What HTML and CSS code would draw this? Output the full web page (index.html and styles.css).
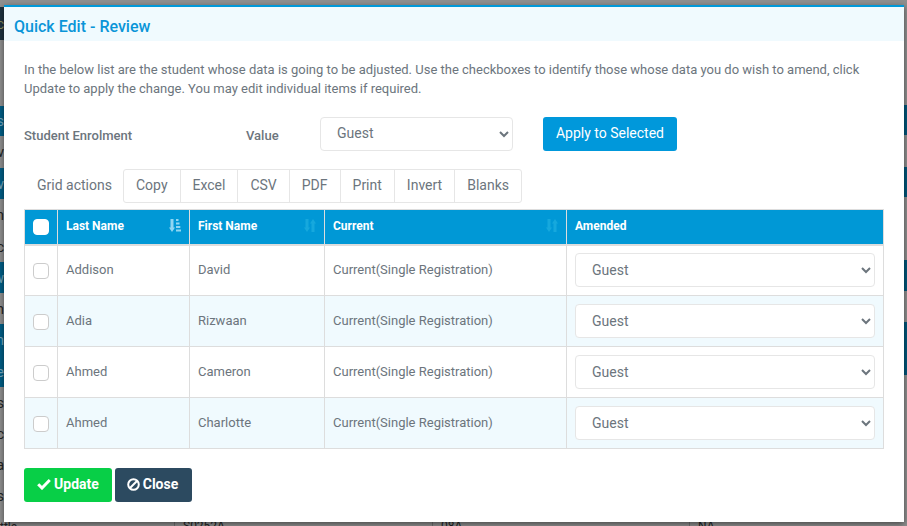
FILE: index.html
```html
<!DOCTYPE html>
<html lang="en">
<head>
  <meta charset="UTF-8">
  <meta name="viewport" content="width=device-width, initial-scale=1.0">
  <title>Quick Edit - Review</title>
  <link rel="stylesheet" href="styles.css">
</head>
<body>
  <!-- dimmed page behind the dialog -->
  <div class="backdrop">
    <div class="strip-left">
      <div></div>
      <div class="dark">ic</div>
      <div></div>
      <div class="band">s</div>
      <div>v</div>
      <div class="band">v</div>
      <div>n</div>
      <div>c</div>
      <div class="band">w</div>
      <div>h</div>
      <div class="band">n</div>
      <div class="band">e</div>
      <div>s</div>
      <div>c</div>
      <div>a</div>
      <div>s</div>
      <div class="tail">ttle</div>
    </div>
    <div class="behind">
      <div class="behind-row">
        <div class="behind-cell first"></div>
        <div class="behind-cell second">S0252A</div>
        <div class="behind-cell third">08A</div>
        <div class="behind-cell">NA</div>
      </div>
    </div>
    <div class="strip-right">
      <div></div>
      <div class="band"></div>
      <div></div>
      <div class="band"></div>
      <div></div>
      <div class="band"></div>
      <div></div>
      <div class="band"></div>
      <div></div>
    </div>
  </div>

  <div class="modal">
    <div class="modal-header">Quick Edit - Review</div>
    <div class="modal-body">
      <p class="intro">In the below list are the student whose data is going to be adjusted. Use the checkboxes to identify those whose data you do wish to amend, click Update to apply the change. You may edit individual items if required.</p>

      <div class="bulk-row">
        <label class="bulk-label">Student Enrolment</label>
        <label class="bulk-value">Value</label>
        <select class="form-select bulk-select"><option>Guest</option></select>
        <button class="btn btn-apply">Apply to Selected</button>
      </div>

      <div class="grid-actions">
        <span class="grid-title">Grid actions</span>
        <div class="grid-buttons">
          <button>Copy</button>
          <button>Excel</button>
          <button>CSV</button>
          <button>PDF</button>
          <button>Print</button>
          <button>Invert</button>
          <button>Blanks</button>
        </div>
      </div>

      <table class="review-table">
        <colgroup>
          <col class="col-check">
          <col class="col-last">
          <col class="col-first">
          <col class="col-current">
          <col>
        </colgroup>
        <thead>
          <tr>
            <th><input type="checkbox" class="check check-head"></th>
            <th>
              <div class="th-inner">Last Name
                <svg class="sort sort-active" width="12" height="13" viewBox="0 0 12 13"><path d="M1.500 0h3v8.500H6L3 13 0 8.500h1.500z"/><path d="M7 0h2.500v2H7zM7 3.500h3.500v2H7zM7 7h4.300v2H7zM7 10.500h5v2H7z"/></svg>
              </div>
            </th>
            <th>
              <div class="th-inner">First Name
                <svg class="sort" width="12" height="13" viewBox="0 0 12 13"><path d="M1.500 0h3v8.500H6L3 13 0 8.500h1.500zM7.500 13h3V4.500H12L9 0 6 4.500h1.500z"/></svg>
              </div>
            </th>
            <th>
              <div class="th-inner">Current
                <svg class="sort" width="12" height="13" viewBox="0 0 12 13"><path d="M1.500 0h3v8.500H6L3 13 0 8.500h1.500zM7.500 13h3V4.500H12L9 0 6 4.500h1.500z"/></svg>
              </div>
            </th>
            <th>Amended</th>
          </tr>
        </thead>
        <tbody>
          <tr>
            <td><input type="checkbox" class="check"></td>
            <td>Addison</td>
            <td>David</td>
            <td>Current(Single Registration)</td>
            <td class="cell-select"><select class="form-select"><option>Guest</option></select></td>
          </tr>
          <tr>
            <td><input type="checkbox" class="check"></td>
            <td>Adia</td>
            <td>Rizwaan</td>
            <td>Current(Single Registration)</td>
            <td class="cell-select"><select class="form-select"><option>Guest</option></select></td>
          </tr>
          <tr>
            <td><input type="checkbox" class="check"></td>
            <td>Ahmed</td>
            <td>Cameron</td>
            <td>Current(Single Registration)</td>
            <td class="cell-select"><select class="form-select"><option>Guest</option></select></td>
          </tr>
          <tr>
            <td><input type="checkbox" class="check"></td>
            <td>Ahmed</td>
            <td>Charlotte</td>
            <td>Current(Single Registration)</td>
            <td class="cell-select"><select class="form-select"><option>Guest</option></select></td>
          </tr>
        </tbody>
      </table>

      <div class="modal-actions">
        <button class="btn btn-update">
          <svg width="14" height="12" viewBox="0 0 14 12"><path d="M1.200 6.200 5 10l7.800-8" fill="none" stroke="#fff" stroke-width="3"/></svg>Update
        </button>
        <button class="btn btn-close">
          <svg width="13" height="13" viewBox="0 0 13 13"><circle cx="6.500" cy="6.500" r="5.300" fill="none" stroke="#fff" stroke-width="2"/><path d="M2.800 10.200l7.400-7.400" stroke="#fff" stroke-width="2"/></svg>Close
        </button>
      </div>
    </div>
  </div>
</body>
</html>
```

FILE: styles.css
```css
* {
  box-sizing: border-box;
}
html, body {
  margin: 0;
  padding: 0;
  width: 100%;
  height: 100%;
  overflow: hidden;
}
body {
  font-family: Roboto, "Liberation Sans", sans-serif;
  font-size: 13px;
  color: #6c757d;
  background-color: #8f8f8f;
}

/* Dimmed page */
.backdrop {
  display: flex;
  height: 526px;
  color: #222;
  font-size: 14px;
  overflow: hidden;
}
.strip-left {
  width: 4px;
  flex-shrink: 0;
  display: grid;
  grid-template-rows: 7px 33px 66px 30px 32px 31px 32px 31px 31px 31px 32px 31px 31px 31px 31px 31px 15px;
}
.strip-left div {
  display: flex;
  align-items: center;
  justify-content: flex-end;
  width: 4px;
  overflow: hidden;
}
.strip-left .band {
  background-color: #005d85;
  color: #7aa9bd;
}
.strip-left .dark {
  background-color: #1e3240;
  color: #8a8f60;
}
.strip-left .tail {
  width: 20px;
  justify-content: flex-start;
  align-items: flex-start;
  font-size: 12px;
  line-height: 11px;
  padding-top: 11px;
}
.strip-right {
  width: 3px;
  flex-shrink: 0;
  display: grid;
  grid-template-rows: 105px 30px 32px 30px 63px 31px 31px 53px 1fr;
}
.strip-right .band {
  background-color: #00567a;
}
.behind {
  flex: 1;
  display: flex;
  flex-direction: column;
  justify-content: flex-end;
}
.behind-row {
  display: flex;
  height: 5px;
  overflow: hidden;
  line-height: 11px;
  font-size: 12px;
}
.behind-cell {
  border-left: 1px solid #6f6f6f;
  padding-left: 8px;
  flex: 1;
}
.behind-cell.first {
  border-left: 0;
  flex: 0 0 170px;
}
.behind-cell.second {
  flex: 0 0 258px;
}
.behind-cell.third {
  flex: 0 0 257px;
}

/* Dialog */
.modal {
  position: absolute;
  top: 5px;
  left: 4px;
  width: 900px;
  height: 517px;
  background-color: #fff;
  border-top: 2px solid #0098d8;
  box-shadow: 0 2px 6px rgba(0, 0, 0, 0.5);
}
.modal-header {
  height: 34px;
  padding-left: 10px;
  background-color: #f0fafe;
  color: #0a95d8;
  font-size: 16px;
  font-weight: 500;
  line-height: 40px;
}
.modal-body {
  padding: 19px 20px 0;
}
.intro {
  margin: 0;
  line-height: 19px;
}

.bulk-row {
  display: flex;
  align-items: center;
  margin-top: 19px;
}
.bulk-label,
.bulk-value {
  font-weight: 500;
  padding-top: 2px;
}
.bulk-label {
  width: 222px;
}
.bulk-value {
  width: 74px;
}
.form-select {
  width: 100%;
  height: 34px;
  padding: 0 8px 0 12px;
  background-color: #fff;
  border: 1px solid #e6e6e6;
  border-radius: 4px;
  color: #6c757d;
  font-family: inherit;
  font-size: 14px;
}
.bulk-select {
  width: 193px;
  margin-right: 30px;
  padding-bottom: 2px;
}
.btn {
  height: 34px;
  padding: 0 0 2px;
  border: 0;
  border-radius: 3px;
  color: #fff;
  font-family: inherit;
  font-size: 14px;
}
.btn-apply {
  width: 134px;
  background-color: #0098db;
}

.grid-actions {
  display: flex;
  align-items: center;
  margin-top: 18px;
}
.grid-title {
  width: 99px;
  padding: 0 0 2px 13px;
  font-size: 14px;
}
.grid-buttons {
  display: flex;
  height: 34px;
  border: 1px solid #e6e6e6;
  border-radius: 3px;
}
.grid-buttons button {
  padding: 0 12px 2px;
  background: none;
  border: 0;
  border-left: 1px solid #e6e6e6;
  color: #6c757d;
  font-family: inherit;
  font-size: 14px;
}
.grid-buttons button:first-child {
  border-left: 0;
}

/* Review grid */
.review-table {
  width: 860px;
  margin-top: 6px;
  border-collapse: collapse;
  table-layout: fixed;
}
.col-check {
  width: 33px;
}
.col-last {
  width: 132px;
}
.col-first {
  width: 135px;
}
.col-current {
  width: 242px;
}
.review-table th {
  height: 35px;
  padding: 0 8px 2px;
  background-color: #0098d6;
  border: 1px solid #ddd;
  border-bottom-width: 2px;
  color: #fff;
  font-size: 12px;
  font-weight: 700;
  text-align: left;
}
.th-inner {
  display: flex;
  align-items: center;
  justify-content: space-between;
}
.sort {
  fill: #16a8dd;
}
.sort-active {
  fill: #8fd6f2;
}
.review-table td {
  height: 51px;
  padding: 0 8px 2px;
  border: 1px solid #ddd;
}
.review-table td.cell-select {
  padding-bottom: 0;
}
.review-table tbody tr:nth-child(even) td {
  background-color: #f0fafe;
}
.check {
  appearance: none;
  display: block;
  width: 16px;
  height: 16px;
  margin: 4px 0 0;
  background-color: #fff;
  border: 1px solid #ccc;
  border-radius: 4px;
}
.check-head {
  margin-top: 2px;
  border-color: #fff;
}

.modal-actions {
  display: flex;
  gap: 3px;
  margin-top: 19px;
}
.btn-update,
.btn-close {
  display: flex;
  align-items: center;
  justify-content: center;
  gap: 3px;
  font-weight: 700;
}
.btn-update {
  width: 88px;
  background-color: #08cf47;
}
.btn-close {
  width: 77px;
  padding-right: 2px;
  background-color: #2c4a60;
}
```
